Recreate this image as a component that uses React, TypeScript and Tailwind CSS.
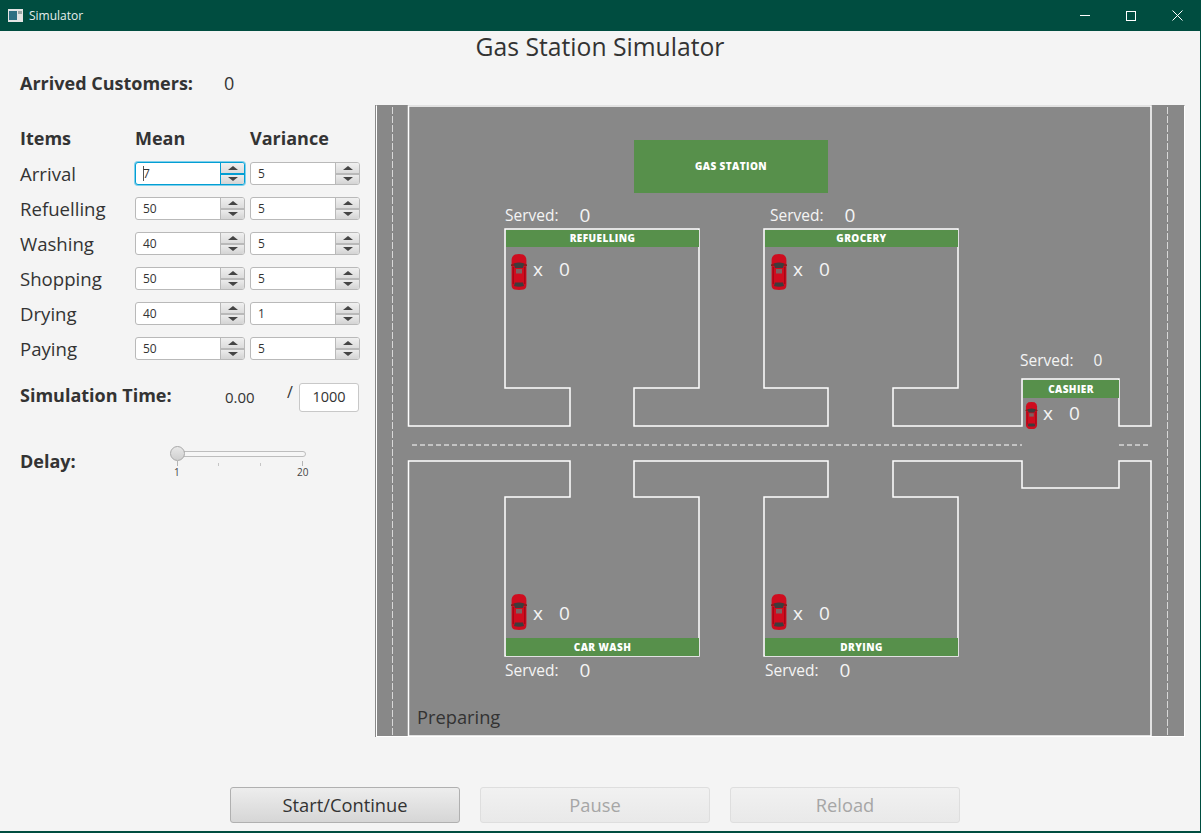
import React from "react";

const Car = ({ className }: { className: string }) => (
  <svg viewBox="0 0 16 36" className={className}>
    <path d="M4 0.4 Q8 -0.4 12 0.4 Q15.4 2 15.4 6 L15.4 31 Q15.4 34.6 12.5 35.5 Q8 36.4 3.5 35.5 Q0.6 34.6 0.6 31 L0.6 6 Q0.6 2 4 0.4 Z" fill="#cf0c1e" />
    <path d="M0 10.5 L2.5 9.5 L13.5 9.5 L16 10.5 L16 12 L0 12 Z" fill="#8a1c1c" />
    <path d="M3 9.5 Q8 7.5 13 9.5 L12 14 L4 14 Z" fill="#3d3d3d" />
    <rect x="5" y="15" width="6" height="4.5" fill="#7d6060" />
    <path d="M4 28.5 L12 28.5 L13 32 Q8 33.5 3 32 Z" fill="#3d3d3d" />
    <path d="M2.2 13 L2.2 30 M13.8 13 L13.8 30" stroke="#9a0412" strokeWidth="1" />
  </svg>
);

const Spinner = ({ value, focused }: { value: string; focused?: boolean }) => (
  <div
    className={`flex h-[23px] w-[110px] overflow-hidden rounded-[3px] border bg-white ${
      focused ? "border-[#039ed3] shadow-[0_0_0_1px_#7fd0ec]" : "border-[#b9b9b9]"
    }`}
  >
    <div className="flex flex-1 items-center pl-[7px] text-[12px] text-[#333]">
      {focused && <span className="h-[15px] w-px bg-[#555]" />}
      <span className={focused ? "-ml-px" : ""}>{value}</span>
    </div>
    <div
      className={`flex w-[24px] flex-col border-l ${
        focused ? "border-[#039ed3]" : "border-[#b9b9b9]"
      }`}
    >
      <div className="flex flex-1 items-center justify-center bg-gradient-to-b from-[#f0f0f0] to-[#dcdcdc]">
        <span className="h-0 w-0 border-x-[5px] border-b-[4px] border-x-transparent border-b-[#444]" />
      </div>
      <div className={`h-[2px] ${focused ? "bg-[#039ed3]" : "bg-[#b9b9b9]"}`} />
      <div className="flex flex-1 items-center justify-center bg-gradient-to-b from-[#ececec] to-[#d4d4d4]">
        <span className="h-0 w-0 border-x-[5px] border-t-[4px] border-x-transparent border-t-[#444]" />
      </div>
    </div>
  </div>
);

const rows = [
  { label: "Arrival", mean: "7", variance: "5", focused: true },
  { label: "Refuelling", mean: "50", variance: "5" },
  { label: "Washing", mean: "40", variance: "5" },
  { label: "Shopping", mean: "50", variance: "5" },
  { label: "Drying", mean: "40", variance: "1" },
  { label: "Paying", mean: "50", variance: "5" },
];

const Served = ({ className }: { className: string }) => (
  <div className={`absolute flex h-5 items-center gap-[21px] text-[15.5px] text-[#f4f4f4] ${className}`}>
    <span className="mt-[2px]">Served:</span>
    <span className="text-[19px]">0</span>
  </div>
);

const Count = ({ className, textClass }: { className: string; textClass: string }) => (
  <div className={`absolute flex h-[36px] items-center text-[#f4f4f4] ${className}`}>
    <Car className="h-[36px] w-[16px]" />
    <div className={`flex items-center ${textClass}`}>
      <span className="ml-[6px] w-[26px] text-[19px]">x</span>
      <span className="text-[19px]">0</span>
    </div>
  </div>
);

const Banner = ({ className, text }: { className: string; text: string }) => (
  <div
    className={`absolute flex items-center justify-center bg-[#57904b] text-[10px] font-extrabold tracking-[0.4px] text-white ${className}`}
  >
    {text}
  </div>
);

const GasMap = () => (
  <div className="relative h-[632px] w-[809px] border border-white border-t-[#888888] bg-[#888888] shadow-[-1px_0_0_#8a8a8a]">
    <svg className="absolute -left-px -top-px" width="810" height="632" fill="none" stroke="#ffffff">
      <path
        strokeWidth="1.5"
        d="M32.5 1 H775 V321 H743 V274 H646 V321 H517 V283 H582 V124 H388 V283 H452 V321 H258 V283 H323 V124 H129 V283 H194 V321 H32.5 Z"
      />
      <path
        strokeWidth="1.5"
        d="M32.5 631 V356 H194 V392 H129 V551 H323 V392 H258 V356 H452 V392 H388 V551 H582 V392 H517 V356 H646 V383 H743 V356 H775 V631 Z"
      />
      <path strokeWidth="1" strokeDasharray="5 3" d="M36 340 H646 M743 340 H775" />
      <path strokeWidth="1" stroke="#d8d8d8" strokeDasharray="7 2" d="M16.5 2 V632 M791.5 2 V632" />
    </svg>
    <Banner className="left-[257px] top-[34px] h-[53px] w-[194px]" text="GAS STATION" />
    <Banner className="left-[129px] top-[124px] h-[17px] w-[193px]" text="REFUELLING" />
    <Banner className="left-[388px] top-[124px] h-[17px] w-[193px]" text="GROCERY" />
    <Banner className="left-[646px] top-[274px] h-[18px] w-[96px]" text="CASHIER" />
    <Banner className="left-[129px] top-[532px] h-[18px] w-[193px]" text="CAR WASH" />
    <Banner className="left-[388px] top-[532px] h-[18px] w-[193px]" text="DRYING" />

    <Served className="left-[128px] top-[99px]" />
    <Served className="left-[393px] top-[99px]" />
    <Served className="left-[128px] top-[554px]" />
    <Served className="left-[388px] top-[554px]" />
    <div className="absolute left-[643px] top-[245px] flex h-5 items-center gap-[20px] text-[15.5px] text-[#f4f4f4]">
      <span>Served:</span>
      <span>0</span>
    </div>

    <Count className="left-[134px] top-[148px]" textClass="-mt-[5px]" />
    <Count className="left-[394px] top-[148px]" textClass="-mt-[5px]" />
    <Count className="left-[134px] top-[488px]" textClass="mt-[3px]" />
    <Count className="left-[394px] top-[488px]" textClass="mt-[3px]" />
    <div className="absolute left-[648px] top-[296px] flex h-[27px] items-center text-[#f4f4f4]">
      <Car className="h-[27px] w-[13px]" />
      <div className="-mt-[4px] flex items-center">
        <span className="ml-[5px] w-[26px] text-[19px]">x</span>
        <span className="text-[19px]">0</span>
      </div>
    </div>

    <div className="absolute left-[40px] top-[598px] text-[18.3px] leading-[26px] text-[#333]">Preparing</div>
  </div>
);

const DelaySlider = () => (
  <div className="relative h-[32px] w-[140px]">
    <div className="absolute left-[1px] top-[5px] h-[6px] w-[135px] rounded-full border border-[#bdbdbd] bg-[#f6f6f6]" />
    <div className="absolute left-0 top-0 h-[15px] w-[15px] rounded-full border border-[#a8a8a8] bg-gradient-to-b from-[#e8e8e8] to-[#cfcfcf]" />
    <div className="absolute left-[7px] top-[15px] h-[5px] w-px bg-[#b5b5b5]" />
    <div className="absolute left-[48px] top-[17px] h-[3px] w-px bg-[#c5c5c5]" />
    <div className="absolute left-[90px] top-[17px] h-[3px] w-px bg-[#c5c5c5]" />
    <div className="absolute left-[132px] top-[15px] h-[5px] w-px bg-[#b5b5b5]" />
    <span className="absolute left-[4px] top-[19px] text-[10px] leading-[14px] text-[#444]">1</span>
    <span className="absolute left-[127px] top-[19px] text-[10px] leading-[14px] text-[#444]">20</span>
  </div>
);

const ActionButton = ({ text, disabled }: { text: string; disabled?: boolean }) => (
  <button
    type="button"
    className={`h-[36px] w-[230px] rounded-[3px] border bg-gradient-to-b text-[18.3px] ${
      disabled
        ? "border-[#dedede] from-[#f1f1f1] to-[#e9e9e9] text-[#a6a6a6]"
        : "border-[#b0b0b0] from-[#ededed] to-[#d6d6d6] text-[#333]"
    }`}
  >
    {text}
  </button>
);

export default function App() {
  return (
    <div className="flex h-[833px] w-[1201px] flex-col overflow-hidden border-r border-b-2 border-[#004d40] bg-[#f4f4f4] font-['Open_Sans',sans-serif] text-[#333]">
      <header className="flex h-[31px] shrink-0 items-center bg-[#004d40] pl-[8px] text-[12px] text-[#e6efed]">
        <svg width="15" height="13" viewBox="0 0 15 13" className="mr-[6px]">
          <rect width="15" height="13" fill="#e4e4e4" />
          <rect x="1" y="2" width="8" height="9" fill="#2e6f82" />
          <rect x="10" y="2" width="4" height="3" fill="#9aa5a5" />
        </svg>
        Simulator
        <div className="ml-auto flex">
          <div className="flex h-[31px] w-[46px] items-center justify-center">
            <span className="h-px w-[10px] bg-white" />
          </div>
          <div className="flex h-[31px] w-[46px] items-center justify-center">
            <span className="h-[10px] w-[10px] border border-white" />
          </div>
          <div className="flex h-[31px] w-[46px] items-center justify-center">
            <svg width="11" height="11" stroke="#fff" strokeWidth="1">
              <path d="M0.5 0.5 L10.5 10.5 M10.5 0.5 L0.5 10.5" />
            </svg>
          </div>
        </div>
      </header>

      <h1 className="mt-[1px] h-[30px] text-center text-[24.7px] leading-[30px]">Gas Station Simulator</h1>

      <div className="flex flex-1 items-start">
        <aside className="w-[376px] shrink-0 pl-[20px]">
          <div className="mt-[7px] flex h-[28px] items-center text-[18px]">
            <span className="w-[204px] font-bold">Arrived Customers:</span>
            <span>0</span>
          </div>
          <div className="mt-[27px] flex h-[28px] items-center text-[18px] font-bold">
            <span className="w-[115px]">Items</span>
            <span className="w-[115px]">Mean</span>
            <span>Variance</span>
          </div>
          <div className="mt-[10px] flex flex-col gap-[12px]">
            {rows.map((row) => (
              <div key={row.label} className="flex h-[23px] items-center">
                <span className="w-[115px] text-[18.6px]">{row.label}</span>
                <Spinner value={row.mean} focused={row.focused} />
                <span className="w-[5px]" />
                <Spinner value={row.variance} />
              </div>
            ))}
          </div>
          <div className="mt-[22px] flex h-[30px] items-center">
            <span className="-mt-[4px] w-[205px] text-[18px] font-bold">Simulation Time:</span>
            <span className="w-[62px] text-[15px]">0.00</span>
            <span className="-mt-[10px] w-[12px] text-[16px]">/</span>
            <div className="flex h-[29px] w-[60px] items-center justify-center rounded-[3px] border border-[#c8c8c8] bg-white text-[14.5px]">
              1000
            </div>
          </div>
          <div className="mt-[34px] flex items-start">
            <span className="mt-[3px] w-[150px] text-[18px] leading-[24px] font-bold">Delay:</span>
            <DelaySlider />
          </div>
        </aside>
        <main className="mt-[43px]">
          <GasMap />
        </main>
      </div>

      <footer className="mb-[8px] ml-[230px] flex gap-[20px]">
        <ActionButton text="Start/Continue" />
        <ActionButton text="Pause" disabled />
        <ActionButton text="Reload" disabled />
      </footer>
    </div>
  );
}
